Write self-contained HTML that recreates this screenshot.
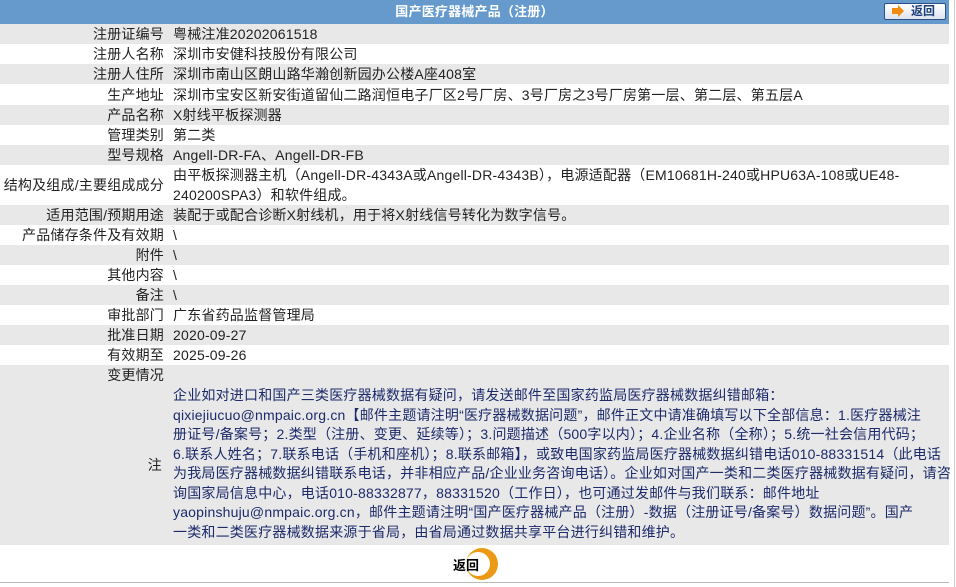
<!DOCTYPE html>
<html><head><meta charset="utf-8"><style>
body{margin:0;width:956px;height:587px;background:#fff;font-family:"Liberation Sans","Noto Sans CJK SC",sans-serif;font-size:14px;letter-spacing:0.2px;color:#222;position:relative;overflow:hidden}
.hd{position:absolute;left:0;top:0;width:949px;height:24px;background:#6699cc;color:#fff;font-weight:bold;text-align:center;line-height:24px;font-size:13px}
.btn{position:absolute;left:884px;top:3px;width:62px;height:17px;border:1px solid #2a5088;border-radius:2px;background:linear-gradient(#fff,#dde4ee);box-sizing:border-box;color:#1a3f7a;font-weight:bold;font-size:12px;line-height:15px;letter-spacing:0}
.btn i{position:absolute;left:7px;top:4px;width:7px;height:6px;background:#f08a10}
.btn b{position:absolute;left:13px;top:1px;border-left:6px solid #f08a10;border-top:6px solid transparent;border-bottom:6px solid transparent}
.btn span{position:absolute;left:26px;top:0}
.r{position:absolute;left:0;width:949px;height:20px;line-height:20px}
.g{background:#e8e8e8}
.l{position:absolute;right:785px;top:0;white-space:nowrap}
.v{position:absolute;left:173px;top:0;white-space:nowrap}
.note{position:absolute;left:173px;top:386px;line-height:19.5px;color:#1c2a6a;white-space:nowrap}
.vline{position:absolute;left:954px;top:0;width:1px;height:587px;background:#ccc}
</style></head><body>
<div class="hd">国产医疗器械产品（注册）</div>
<div class="btn"><i></i><b></b><span>返回</span></div>
<div class="r g" style="top:24px"><span class="l">注册证编号</span><span class="v">粤械注准20202061518</span></div>
<div class="r" style="top:44px"><span class="l">注册人名称</span><span class="v">深圳市安健科技股份有限公司</span></div>
<div class="r g" style="top:64px"><span class="l">注册人住所</span><span class="v">深圳市南山区朗山路华瀚创新园办公楼A座408室</span></div>
<div class="r" style="top:85px"><span class="l">生产地址</span><span class="v">深圳市宝安区新安街道留仙二路润恒电子厂区2号厂房、3号厂房之3号厂房第一层、第二层、第五层A</span></div>
<div class="r g" style="top:105px"><span class="l">产品名称</span><span class="v">X射线平板探测器</span></div>
<div class="r" style="top:125px"><span class="l">管理类别</span><span class="v">第二类</span></div>
<div class="r g" style="top:145px"><span class="l">型号规格</span><span class="v">Angell-DR-FA、Angell-DR-FB</span></div>
<div class="r" style="top:165px;height:40px"><span class="l" style="top:10px">结构及组成/主要组成成分</span><span class="v">由平板探测器主机（Angell-DR-4343A或Angell-DR-4343B），电源适配器（EM10681H-240或HPU63A-108或UE48-<br>240200SPA3）和软件组成。</span></div>
<div class="r g" style="top:205px"><span class="l">适用范围/预期用途</span><span class="v">装配于或配合诊断X射线机，用于将X射线信号转化为数字信号。</span></div>
<div class="r" style="top:225px"><span class="l">产品储存条件及有效期</span><span class="v">\</span></div>
<div class="r g" style="top:245px"><span class="l">附件</span><span class="v">\</span></div>
<div class="r" style="top:265px"><span class="l">其他内容</span><span class="v">\</span></div>
<div class="r g" style="top:285px"><span class="l">备注</span><span class="v">\</span></div>
<div class="r" style="top:305px"><span class="l">审批部门</span><span class="v">广东省药品监督管理局</span></div>
<div class="r g" style="top:325px"><span class="l">批准日期</span><span class="v">2020-09-27</span></div>
<div class="r" style="top:345px"><span class="l">有效期至</span><span class="v">2025-09-26</span></div>
<div class="r g" style="top:365px;height:180px"><span class="l">变更情况</span><span class="l" style="top:90px;right:787px">注</span></div>
<div class="note">企业如对进口和国产三类医疗器械数据有疑问，请发送邮件至国家药监局医疗器械数据纠错邮箱：<br>qixiejiucuo@nmpaic.org.cn【邮件主题请注明“医疗器械数据问题”，邮件正文中请准确填写以下全部信息：1.医疗器械注<br>册证号/备案号；2.类型（注册、变更、延续等）；3.问题描述（500字以内）；4.企业名称（全称）；5.统一社会信用代码；<br>6.联系人姓名；7.联系电话（手机和座机）；8.联系邮箱】，或致电国家药监局医疗器械数据纠错电话010-88331514（此电话<br>为我局医疗器械数据纠错联系电话，并非相应产品/企业业务咨询电话）。企业如对国产一类和二类医疗器械数据有疑问，请咨<br>询国家局信息中心，电话010-88332877，88331520（工作日），也可通过发邮件与我们联系：邮件地址<br>yaopinshuju@nmpaic.org.cn，邮件主题请注明“国产医疗器械产品（注册）-数据（注册证号/备案号）数据问题”。国产<br>一类和二类医疗器械数据来源于省局，由省局通过数据共享平台进行纠错和维护。</div>
<svg style="position:absolute;left:462px;top:548px" width="40" height="32"><circle cx="20" cy="16" r="16" fill="#ec9a16"/><circle cx="16" cy="16" r="12" fill="#fff"/></svg>
<div style="position:absolute;left:453px;top:555px;font-weight:bold;font-size:13px;color:#000;letter-spacing:0">返回</div>
<div style="position:absolute;left:0;top:582px;width:949px;height:1px;background:#bbb"></div>
<div class="vline"></div>
</body></html>
